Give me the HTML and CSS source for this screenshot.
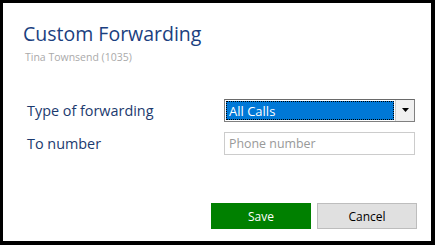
FILE: index.html
```html
<!DOCTYPE html>
<html lang="en">
<head>
    <meta charset="UTF-8">
    <title>Custom Forwarding</title>
    <link rel="stylesheet" href="styles.css">
</head>
<body>
    <div class="dialog">
        <div class="header">
            <h1>Custom Forwarding</h1>
            <div class="subtitle">Tina Townsend (1035)</div>
        </div>

        <div class="form">
            <div class="row">
                <label>Type of forwarding</label>
                <div class="select">
                    <div class="select-value"><span>All Calls</span></div>
                    <div class="select-arrow">
                        <svg width="9" height="5" viewBox="0 0 9 5"><path d="M1 0h7L4.5 4z" fill="#000"/></svg>
                    </div>
                </div>
            </div>
            <div class="row">
                <label for="toNumber">To number</label>
                <input type="text" id="toNumber" placeholder="Phone number">
            </div>
        </div>

        <div class="actions">
            <button class="btn save">Save</button>
            <button class="btn cancel">Cancel</button>
        </div>
    </div>
</body>
</html>
```

FILE: styles.css
```css
html, body {
    margin: 0;
    padding: 0;
    background: #000;
}

body {
    font-family: 'Open Sans', 'Noto Sans', sans-serif;
    width: 435px;
    height: 245px;
    padding: 3px 4px 4px 3px;
    box-sizing: border-box;
}

.dialog {
    background: #fff;
    height: 100%;
    box-sizing: border-box;
    padding: 17px 14px 0 20px;
    display: flex;
    flex-direction: column;
}

h1 {
    margin: 0;
    font-weight: 400;
    font-size: 19.5px;
    line-height: 28px;
    color: #1b3f80;
}

.subtitle {
    font-size: 10.5px;
    color: #aaa;
    margin-top: 2px;
    padding-left: 2px;
}

.form {
    margin-top: 35px;
    display: flex;
    flex-direction: column;
    gap: 10px;
}

.row {
    display: flex;
    align-items: center;
    padding-left: 4px;
}

label {
    width: 197px;
    font-size: 14.4px;
    color: #1c3a6e;
}

.select {
    width: 191px;
    height: 23px;
    box-sizing: border-box;
    border: 1px solid #808080;
    border-top-color: #6a6a6a;
    display: flex;
    background: #fff;
}

.select-value {
    flex: 1;
    background: #0078d7;
    border: 1px dotted #000;
    margin: 1px;
    display: flex;
    align-items: center;
}

.select-value span {
    color: #fff;
    font-size: 13px;
    padding-left: 2px;
}

.select-arrow {
    width: 18px;
    background: #f0f0f0;
    border-left: 1px solid #ccc;
    display: flex;
    align-items: center;
    justify-content: center;
}

input[type="text"] {
    width: 191px;
    height: 23px;
    box-sizing: border-box;
    border: 1px solid #ccc;
    padding: 0 4px;
    font-family: inherit;
    font-size: 12.4px;
    margin: 0;
}

input::placeholder {
    color: #999;
}

.actions {
    margin-top: auto;
    margin-bottom: 12px;
    display: flex;
    justify-content: flex-end;
    gap: 6px;
}

.btn {
    width: 100px;
    height: 26px;
    font-family: inherit;
    font-size: 12px;
    cursor: pointer;
    border-radius: 0;
}

.save {
    background: #008000;
    color: #fff;
    border: 1px solid #008000;
}

.cancel {
    background: #e0e0e0;
    color: #000;
    border: 1px solid #bdbdbd;
}
```
